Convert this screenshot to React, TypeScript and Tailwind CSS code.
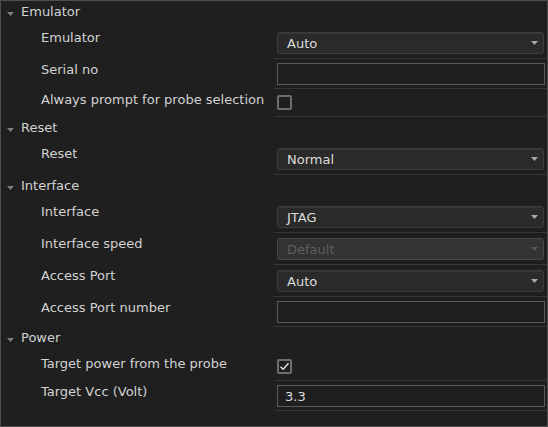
import React from "react";

const Caret = ({ color = "#8c8c8c" }: { color?: string }) => (
  <svg width="7" height="4" viewBox="0 0 7 4" className="block">
    <path d="M0 0H7L3.5 4Z" fill={color} />
  </svg>
);

const Header = ({ title }: { title: string }) => (
  <div className="h-[26px] pt-[1px]">
    <div className="flex h-[20px] items-start pl-[6px]">
      <div className="mt-[10px]">
        <Caret color="#7e7e7e" />
      </div>
      <span className="ml-[7px] leading-[20px]">{title}</span>
    </div>
  </div>
);

const Label = ({ text }: { text: string }) => (
  <div className="w-[273px] shrink-0 pl-[40px] pt-[1px] leading-[20px]">{text}</div>
);

const SelectRow = ({ label, value, disabled }: { label: string; value: string; disabled?: boolean }) => (
  <div className="flex">
    <Label text={label} />
    <div className="flex-1 border-b border-[#363636] pl-[3px] pr-[3px] pt-[5px] pb-[4px]">
      {disabled ? (
        <div className="flex h-[22px] items-center justify-between rounded-[3px] border border-[#474747] bg-[#333333] pl-[9px] pr-[5px] text-[#5e5e5e]">
          <span className="pt-[1px] leading-[20px]">{value}</span>
          <Caret color="#555555" />
        </div>
      ) : (
        <div className="flex h-[22px] items-center justify-between rounded-[3px] border border-[#3c3c3c] bg-[#2a2a2a] pl-[9px] pr-[5px] text-[#dcdcdc] shadow-[inset_0_1px_0_#353535]">
          <span className="pt-[1px] leading-[20px]">{value}</span>
          <Caret color="#a8a8a8" />
        </div>
      )}
    </div>
  </div>
);

const InputRow = ({ label, value }: { label: string; value: string }) => (
  <div className="flex">
    <Label text={label} />
    <div className="flex-1 border-b border-[#363636] pl-[3px] pr-[2px] pt-[4px] pb-[3px]">
      <div className="flex h-[22px] items-center border border-[#5a5a5a] pl-[7px] text-[#dcdcdc]">
        <span className="pt-[1px] leading-[20px]">{value}</span>
      </div>
    </div>
  </div>
);

const CheckRow = ({ label, checked }: { label: string; checked?: boolean }) => (
  <div className="flex">
    <Label text={label} />
    <div className="flex-1 border-b border-[#363636] pl-[3px] pr-[2px] pt-[6px] pb-[6px]">
      <div className="flex h-[15px] w-[15px] items-center justify-center rounded-[2px] border-2 border-[#6e6e6e]">
        {checked && (
          <svg width="11" height="11" viewBox="0 0 11 11" className="block">
            <path d="M1.5 5.8L4.2 8.3L9.5 2.3" fill="none" stroke="#e2e2e2" strokeWidth="1.5" />
          </svg>
        )}
      </div>
    </div>
  </div>
);

export default function App() {
  return (
    <div className="h-[427px] w-[548px] overflow-hidden border border-[#4e4e4e] bg-[#1f1f1f] font-['DejaVu_Sans',sans-serif] text-[13px] text-[#d2d2d2]">
      <Header title="Emulator" />
      <SelectRow label="Emulator" value="Auto" />
      <InputRow label="Serial no" value="" />
      <CheckRow label="Always prompt for probe selection" />
      <Header title="Reset" />
      <SelectRow label="Reset" value="Normal" />
      <Header title="Interface" />
      <SelectRow label="Interface" value="JTAG" />
      <SelectRow label="Interface speed" value="Default" disabled />
      <SelectRow label="Access Port" value="Auto" />
      <InputRow label="Access Port number" value="" />
      <Header title="Power" />
      <CheckRow label="Target power from the probe" checked />
      <InputRow label="Target Vcc (Volt)" value="3.3" />
    </div>
  );
}
